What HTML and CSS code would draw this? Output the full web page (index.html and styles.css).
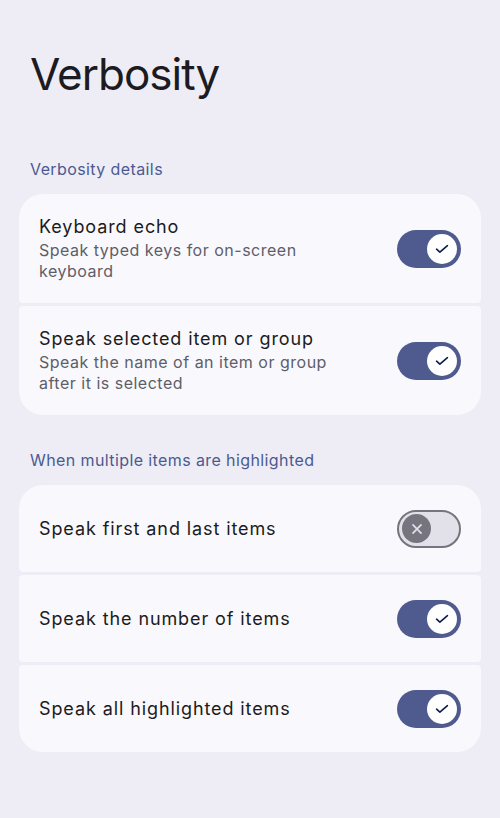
FILE: index.html
```html
<!DOCTYPE html>
<html lang="en-US">
<head>
    <meta charset="UTF-8">
    <meta name="viewport" content="width=device-width, initial-scale=1.0">
    <title>Verbosity</title>
    <link rel="stylesheet" href="styles.css">
</head>
<body>

<h1 class="title">Verbosity</h1>

<h2 class="section-label">Verbosity details</h2>
<div class="group">
    <div class="item two-line">
        <div class="text">
            <div class="item-title">Keyboard echo</div>
            <div class="item-summary">Speak typed keys for on-screen keyboard</div>
        </div>
        <div class="switch on"><span class="thumb"><svg viewBox="0 0 16 16"><path d="M1.8 8.2 L5.6 11.6 L14.2 4.2" /></svg></span></div>
    </div>
    <div class="item two-line">
        <div class="text">
            <div class="item-title">Speak selected item or group</div>
            <div class="item-summary">Speak the name of an item or group after it is selected</div>
        </div>
        <div class="switch on"><span class="thumb"><svg viewBox="0 0 16 16"><path d="M1.8 8.2 L5.6 11.6 L14.2 4.2" /></svg></span></div>
    </div>
</div>

<h2 class="section-label">When multiple items are highlighted</h2>
<div class="group">
    <div class="item">
        <div class="text">
            <div class="item-title">Speak first and last items</div>
        </div>
        <div class="switch off"><span class="thumb"><svg viewBox="0 0 16 16"><path d="M2.6 2.6 L13.4 13.4 M13.4 2.6 L2.6 13.4" /></svg></span></div>
    </div>
    <div class="item">
        <div class="text">
            <div class="item-title">Speak the number of items</div>
        </div>
        <div class="switch on"><span class="thumb"><svg viewBox="0 0 16 16"><path d="M1.8 8.2 L5.6 11.6 L14.2 4.2" /></svg></span></div>
    </div>
    <div class="item">
        <div class="text">
            <div class="item-title">Speak all highlighted items</div>
        </div>
        <div class="switch on"><span class="thumb"><svg viewBox="0 0 16 16"><path d="M1.8 8.2 L5.6 11.6 L14.2 4.2" /></svg></span></div>
    </div>
</div>

</body>
</html>
```

FILE: styles.css
```css
body {
    margin: 0;
    padding: 0 19px;
    background-color: #eeedf5;
    font-family: Inter, "Open Sans", sans-serif;
    color: #1b1b21;
}
.title {
    margin: 44px 0 0 11px;
    font-size: 44px;
    font-weight: 400;
    line-height: 60px;
    letter-spacing: -1px;
}
.section-label {
    margin: 55px 0 0 11px;
    font-size: 16px;
    font-weight: 400;
    line-height: 20px;
    letter-spacing: 0.4px;
    color: #4a5a91;
}
.group {
    display: flex;
    flex-direction: column;
    gap: 3px;
    margin-top: 15px;
}
.group + .section-label {
    margin-top: 35px;
}
.item {
    display: flex;
    align-items: center;
    justify-content: space-between;
    background-color: #f9f8fd;
    border-radius: 4px;
    padding: 0 20px;
    height: 87px;
}
.item.two-line {
    height: 109px;
}
.item:first-child {
    border-top-left-radius: 24px;
    border-top-right-radius: 24px;
}
.item:last-child {
    border-bottom-left-radius: 24px;
    border-bottom-right-radius: 24px;
}
.text {
    flex: 1;
    padding-right: 40px;
}
.item-title {
    font-size: 18px;
    line-height: 24px;
    letter-spacing: 0.9px;
}
.item-summary {
    font-size: 16px;
    line-height: 21px;
    letter-spacing: 0.5px;
    color: #5e5e68;
    margin-top: 1px;
}
.switch {
    width: 64px;
    height: 38px;
    border-radius: 19px;
    box-sizing: border-box;
    display: flex;
    align-items: center;
    flex-shrink: 0;
}
.switch.on {
    background-color: #4f5b8f;
    justify-content: flex-end;
    padding-right: 4px;
}
.switch.off {
    background-color: #e2e1ea;
    border: 2px solid #76757f;
    justify-content: flex-start;
    padding-left: 3px;
}
.thumb {
    width: 30px;
    height: 30px;
    border-radius: 50%;
    display: flex;
    align-items: center;
    justify-content: center;
}
.switch.on .thumb {
    background-color: #ffffff;
}
.switch.off .thumb {
    background-color: #76757f;
    width: 29px;
    height: 29px;
}
.thumb svg {
    fill: none;
    stroke-linecap: round;
    stroke-linejoin: round;
}
.switch.on .thumb svg {
    width: 14px;
    height: 14px;
    stroke: #0b1a4a;
    stroke-width: 1.8;
}
.switch.off .thumb svg {
    width: 12px;
    height: 12px;
    stroke: #e2e1ea;
    stroke-width: 2.2;
}
```
